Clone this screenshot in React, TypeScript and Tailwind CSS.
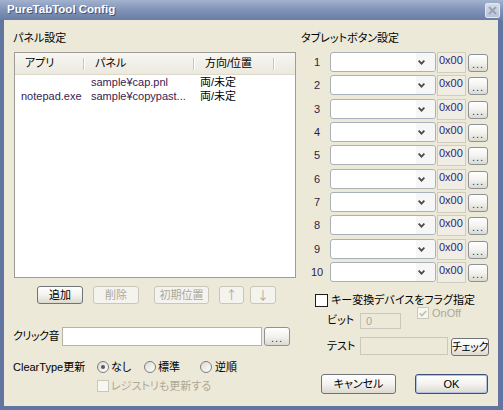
import React from "react";

const FONT = "font-['Liberation_Sans','Noto_Sans_CJK_JP',sans-serif] [font-feature-settings:'palt']";

const Btn = ({
  children,
  disabled,
  className,
}: {
  children: React.ReactNode;
  disabled?: boolean;
  className?: string;
}) => (
  <div
    className={`flex items-center justify-center whitespace-nowrap rounded-[3px] border ${
      disabled
        ? "border-[#c9c7ba] bg-[#f4f3ee] text-[#aca899]"
        : "border-[#707378] bg-linear-to-b from-white via-[#f3f2ee] to-[#dcd9cf] text-black"
    } ${className ?? ""}`}
  >
    {children}
  </div>
);

const Dots = ({ className }: { className?: string }) => (
  <div
    className={`flex items-end justify-center rounded-[3px] border border-[#8d9199] bg-linear-to-b from-white via-[#f3f2ee] to-[#dcd9cf] pb-[3px] ${className ?? ""}`}
  >
    <span className="text-[11px] leading-[8px] tracking-[1px] text-[#2c1f8a]">...</span>
  </div>
);

const Chevron = () => (
  <svg width="7" height="5" viewBox="0 0 7 5">
    <path d="M0.6 0.6 L3.5 3.6 L6.4 0.6" stroke="#4a4a4a" strokeWidth="1.8" fill="none" />
  </svg>
);

const Radio = ({ checked }: { checked?: boolean }) => (
  <div className="flex h-[12px] w-[12px] items-center justify-center rounded-full border border-[#7a7d80] bg-linear-to-br from-[#dcdad2] to-white">
    {checked && <div className="h-[4px] w-[4px] rounded-full bg-[#5a5a5a]" />}
  </div>
);

const buttonRows = [
  { n: "1", h: "h-[23px]" },
  { n: "2", h: "h-[24px]" },
  { n: "3", h: "h-[23px]" },
  { n: "4", h: "h-[23px]" },
  { n: "5", h: "h-[24px]" },
  { n: "6", h: "h-[23px]" },
  { n: "7", h: "h-[23px]" },
  { n: "8", h: "h-[24px]" },
  { n: "9", h: "h-[23px]" },
  { n: "10", h: "h-[23px]" },
];

const App = () => {
  return (
    <div className={`flex h-[410px] w-[503px] flex-col whitespace-nowrap bg-[#6275a0] text-[11px] text-black ${FONT}`}>
      {/* Title bar */}
      <div className="flex h-[20px] items-center justify-between bg-linear-to-b from-[#a3b2cf] via-[#8092b7] to-[#6a7da5] pl-[7px] pr-[3px]">
        <span className="font-['Liberation_Sans',sans-serif] text-[11.5px] font-bold text-white [text-shadow:1px_1px_0_#44557c]">
          PureTabTool Config
        </span>
        <div className="flex h-[15px] w-[15px] items-center justify-center rounded-[2px] border border-[#e3e8f0] bg-linear-to-b from-[#d6dce8] to-[#b9c3d6]">
          <svg width="9" height="9" viewBox="0 0 9 9">
            <path d="M1 1 L8 8 M8 1 L1 8" stroke="#98a2b6" strokeWidth="2" />
          </svg>
        </div>
      </div>

      {/* Body */}
      <div className="flex flex-1 pb-[4px] pl-[4px] pr-[5px]">
        <div className="flex flex-1 bg-[#ece9d8]">
          {/* Left column: panel settings */}
          <div className="ml-[9px] flex w-[284px] flex-col">
            <div className="mt-[11px] h-[14px] leading-[14px]">パネル設定</div>
            <div className="ml-[1px] mt-[7px] flex h-[226px] w-[282px] flex-col border border-[#9c9c98] bg-white">
              <div className="flex h-[22px] items-center border-b border-[#dcd9cb] bg-linear-to-b from-[#f7f6f1] to-[#ebe9df]">
                <div className="flex w-[70px] items-center justify-between pl-[10px]">
                  <span>アプリ</span>
                  <span className="h-[12px] w-[2px] border-l border-r border-l-[#cac7b8] border-r-white" />
                </div>
                <div className="flex w-[110px] items-center justify-between pl-[10px]">
                  <span>パネル</span>
                  <span className="h-[12px] w-[2px] border-l border-r border-l-[#cac7b8] border-r-white" />
                </div>
                <div className="flex w-[80px] items-center justify-between pl-[10px]">
                  <span>方向/位置</span>
                  <span className="h-[12px] w-[2px] border-l border-r border-l-[#cac7b8] border-r-white" />
                </div>
              </div>
              <div className="flex h-[14px] items-center">
                <div className="w-[76px] pl-[6px]" />
                <div className="w-[109px] text-[#3a2250]">sample¥cap.pnl</div>
                <div>両/未定</div>
              </div>
              <div className="flex h-[14px] items-center">
                <div className="w-[76px] pl-[6px] text-[#3a2250]">notepad.exe</div>
                <div className="w-[109px] text-[#3a2250]">sample¥copypast...</div>
                <div>両/未定</div>
              </div>
            </div>

            <div className="mt-[8px] flex h-[18px]">
              <Btn className="ml-[24px] w-[46px]">追加</Btn>
              <Btn disabled className="ml-[10px] w-[46px]">削除</Btn>
              <Btn disabled className="ml-[15px] w-[55px]">初期位置</Btn>
              <Btn disabled className="ml-[10px] w-[25px] font-['Noto_Sans_CJK_JP',sans-serif] text-[12px]">↑</Btn>
              <Btn disabled className="ml-[6px] w-[26px] font-['Noto_Sans_CJK_JP',sans-serif] text-[12px]">↓</Btn>
            </div>

            <div className="mt-[23px] flex h-[19px] items-center">
              <span className="w-[49px] tracking-[-0.5px]">クリック音</span>
              <div className="h-[19px] w-[200px] border border-[#b6b4a8] bg-white" />
              <Dots className="ml-[2px] h-[19px] w-[26px]" />
            </div>

            <div className="mt-[14px] flex h-[14px] items-center">
              <span className="w-[84px]">ClearType更新</span>
              <Radio checked />
              <span className="ml-[2px] w-[33px]">なし</span>
              <Radio />
              <span className="ml-[2px] w-[42px]">標準</span>
              <Radio />
              <span className="ml-[3px]">逆順</span>
            </div>

            <div className="mt-[5px] flex h-[14px] items-center pl-[84px]">
              <div className="h-[12px] w-[12px] border border-[#cac8bb] bg-[#f7f6f1]" />
              <span className="ml-[2px] text-[#aca899]">レジストリも更新する</span>
            </div>
          </div>

          {/* Right column: tablet buttons */}
          <div className="ml-[4px] flex w-[188px] flex-col">
            <div className="mt-[11px] h-[14px] leading-[14px]">タブレットボタン設定</div>
            <div className="mt-[7px] flex flex-col">
              {buttonRows.map((r) => (
                <div key={r.n} className={`flex ${r.h}`}>
                  <div className="ml-[6px] flex h-[20px] w-[20px] items-center justify-center text-[#2f1f3f]">
                    {r.n}
                  </div>
                  <div className="ml-[3px] flex h-[20px] w-[106px] items-center justify-end rounded-[3px] border border-[#a8b0b8] bg-white">
                    <div className="flex h-full w-[19px] items-center justify-start rounded-r-[3px] bg-[#f6f6f6] pl-[2px]">
                      <Chevron />
                    </div>
                  </div>
                  <div className="ml-[1px] h-[21px] w-[29px] border border-[#d0cdbf] bg-[#efede4] pl-[1px] leading-[14px] text-[#2d1f7a]">
                    0x00
                  </div>
                  <Dots className="ml-[2px] mt-[2px] h-[18px] w-[20px]" />
                </div>
              ))}
            </div>

            <div className="mt-[8px] flex h-[14px] items-center">
              <div className="ml-[14px] h-[13px] w-[13px] border border-[#1c1c1c] bg-white" />
              <span className="ml-[3px]">キー変換デバイスをフラグ指定</span>
            </div>

            <div className="flex h-[23px]">
              <span className="ml-[26px] mt-[6px] w-[33px] leading-[14px]">ビット</span>
              <div className="mt-[6px] h-[16px] w-[41px] border border-[#cac8bb] bg-[#ece9d8] pl-[5px] leading-[14px] text-[#aca899]">
                0
              </div>
              <div className="ml-[16px] flex h-[12px] items-center">
                <div className="flex h-[12px] w-[12px] items-center justify-center border border-[#cac8bb] bg-[#f7f6f1]">
                  <svg width="8" height="7" viewBox="0 0 8 7">
                    <path d="M0.8 3.4 L3 5.6 L7.2 1" stroke="#c2c0b2" strokeWidth="1.6" fill="none" />
                  </svg>
                </div>
                <span className="ml-[3px] text-[#aca899]">OnOff</span>
              </div>
            </div>

            <div className="mt-[7px] flex h-[19px]">
              <span className="ml-[26px] mt-[2px] w-[33px] leading-[14px]">テスト</span>
              <div className="h-[18px] w-[88px] border border-[#cac8bb] bg-[#ece9d8]" />
              <Btn className="ml-[3px] mt-[1px] h-[18px] w-[38px] tracking-[-0.3px]">チェック</Btn>
            </div>

            <div className="mt-[18px] flex h-[20px]">
              <Btn className="ml-[20px] w-[75px]">キャンセル</Btn>
              <div className="ml-[19px] flex w-[73px] items-center justify-center rounded-[3px] border border-[#3d4f79] bg-linear-to-b from-white via-[#f3f2ee] to-[#dcd9cf] shadow-[inset_0_0_0_1px_#b4c2e0]">
                OK
              </div>
            </div>
          </div>
        </div>
      </div>
    </div>
  );
};

export default App;
